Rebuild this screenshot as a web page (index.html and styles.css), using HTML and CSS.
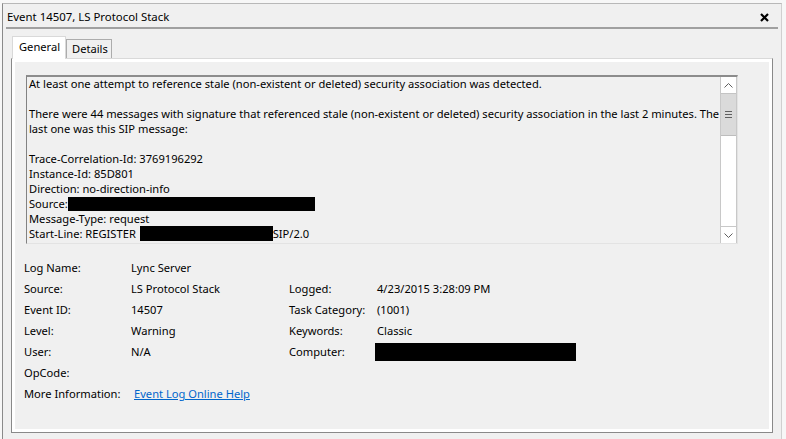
FILE: index.html
```html
<!DOCTYPE html>
<html>
<head>
<meta charset="utf-8">
<link rel="stylesheet" href="styles.css">
</head>
<body>
<div class="frame">
  <div class="titlebar">
    <span class="title">Event 14507, LS Protocol Stack</span>
    <svg class="close" width="9" height="9" viewBox="0 0 9 9"><path d="M1 1L8 8M8 1L1 8" stroke="#000" stroke-width="2.2" fill="none"/></svg>
  </div>
  <div class="sep"></div>
  <div class="tabs">
    <div class="tab active">General</div>
    <div class="tab">Details</div>
  </div>
  <div class="panel">
    <div class="panel-inner">
      <div class="textbox">
        <div class="tb-text">
          <div class="line">At least one attempt to reference stale (non-existent or deleted) security association was detected.</div>
          <div class="line">&nbsp;</div>
          <div class="line">There were 44 messages with signature that referenced stale (non-existent or deleted) security association in the last 2 minutes. The</div>
          <div class="line">last one was this SIP message:</div>
          <div class="line">&nbsp;</div>
          <div class="line">Trace-Correlation-Id: 3769196292</div>
          <div class="line">Instance-Id: 85D801</div>
          <div class="line">Direction: no-direction-info</div>
          <div class="line">Source:<span class="redact r-source"></span></div>
          <div class="line">Message-Type: request</div>
          <div class="line">Start-Line: REGISTER <span class="redact r-start"></span>SIP/2.0</div>
        </div>
        <div class="scrollbar">
          <div class="sb-btn"><svg width="9" height="5" viewBox="0 0 9 5"><path d="M0.5 4.5L4.5 0.5L8.5 4.5" stroke="#606060" fill="none"/></svg></div>
          <div class="sb-thumb"><span></span><span></span><span></span></div>
          <div class="sb-track"></div>
          <div class="sb-btn sb-down"><svg width="9" height="5" viewBox="0 0 9 5"><path d="M0.5 0.5L4.5 4.5L8.5 0.5" stroke="#606060" fill="none"/></svg></div>
        </div>
      </div>
      <div class="details">
        <div>Log Name:</div><div>Lync Server</div><div></div><div></div>
        <div>Source:</div><div>LS Protocol Stack</div><div>Logged:</div><div>4/23/2015 3:28:09 PM</div>
        <div>Event ID:</div><div>14507</div><div>Task Category:</div><div>(1001)</div>
        <div>Level:</div><div>Warning</div><div>Keywords:</div><div>Classic</div>
        <div>User:</div><div>N/A</div><div>Computer:</div><div><span class="redact r-computer"></span></div>
        <div>OpCode:</div><div></div><div></div><div></div>
        <div>More Information:</div><div class="linkcell"><a href="#">Event Log Online Help</a></div><div></div><div></div>
      </div>
    </div>
  </div>
</div>
</body>
</html>
```
FILE: styles.css
```css
html, body {
  margin: 0;
  padding: 0;
  background: #f7f7f7;
  width: 786px;
  height: 439px;
  overflow: hidden;
  font-family: "Noto Sans", sans-serif;
  font-size: 11.15px;
  color: #000;
}
.frame {
  margin: 3px 4px 0 2px;
  height: 436px;
  box-sizing: border-box;
  background: #f0f0f0;
  border-top: 1px solid #b8b8b8;
  border-left: 1px solid #8a8a8a;
  border-right: 1px solid #d0d0d0;
}
.titlebar {
  height: 23px;
  box-sizing: border-box;
  padding: 2px 12px 0 4px;
  display: flex;
  align-items: center;
  justify-content: space-between;
}
.title { font-size: 11.4px; }
.close { display: block; margin-top: 1px; }
.sep {
  height: 2px;
  background: #a0a0a0;
  margin: 0 3px 0 3px;
}
.tabs {
  display: flex;
  align-items: flex-end;
  margin: 6px 0 0 9px;
  height: 23px;
  position: relative;
  z-index: 1;
}
.tab {
  height: 19px;
  width: 46px;
  box-sizing: border-box;
  border: 1px solid #acacac;
  border-bottom: none;
  padding-left: 5px;
  line-height: 18px;
  background: #f0f0f0;
}
.tab.active {
  height: 23px;
  width: 54px;
  background: #fff;
  border-color: #d9d9d9;
  padding-left: 6px;
  line-height: 20px;
  margin-bottom: -1px;
}
.panel {
  margin-left: 8px;
  width: 762px;
  height: 375px;
  box-sizing: border-box;
  border: 1px solid #898989;
  border-top-color: #d9d9d9;
  background: #fff;
  padding: 3px;
}
.panel-inner {
  background: #f0f0f0;
  height: 100%;
  padding: 13px 0 0 0;
  box-sizing: border-box;
}
.textbox {
  margin-left: 11px;
  width: 712px;
  height: 169px;
  box-sizing: border-box;
  border-top: 2px solid #8c8c8c;
  border-left: 1px solid #828282;
  border-right: 1px solid #e3e3e3;
  border-bottom: 1px solid #e3e3e3;
  display: flex;
}
.tb-text {
  flex: 1;
  margin-top: -1px;
  padding: 0 0 0 2px;
  line-height: 15px;
  white-space: nowrap;
  overflow: hidden;
}
.redact {
  display: inline-block;
  background: #000;
  vertical-align: top;
}
.r-source { width: 247px; height: 14px; margin-top: 1px; }
.r-start { width: 133px; height: 15px; margin-left: 1px; }
.r-computer { width: 201px; height: 18px; margin-left: -2px; vertical-align: middle; }
.scrollbar {
  width: 17px;
  box-sizing: border-box;
  border-left: 1px solid #c8c8c8;
  border-right: 1px solid #c8c8c8;
  background: #fff;
  display: flex;
  flex-direction: column;
}
.sb-btn {
  height: 16px;
  display: flex;
  align-items: center;
  justify-content: center;
  background: #fff;
}
.sb-down { border-top: 1px solid #c8c8c8; }
.sb-thumb {
  height: 43px;
  box-sizing: border-box;
  background: #dadada;
  border-top: 1px solid #c4c4c4;
  border-bottom: 1px solid #bdbdbd;
  display: flex;
  flex-direction: column;
  align-items: center;
  justify-content: center;
  gap: 2px;
}
.sb-thumb span {
  display: block;
  width: 7px;
  height: 1px;
  background: #606060;
}
.sb-track { flex: 1; }
.details {
  margin: 13px 0 0 9px;
  display: grid;
  grid-template-columns: 107px 158px 88px 1fr;
  grid-auto-rows: 21px;
  align-items: center;
  white-space: nowrap;
}
.linkcell { padding-left: 3px; }
.linkcell a { color: #0066cc; text-decoration: underline; }
```
